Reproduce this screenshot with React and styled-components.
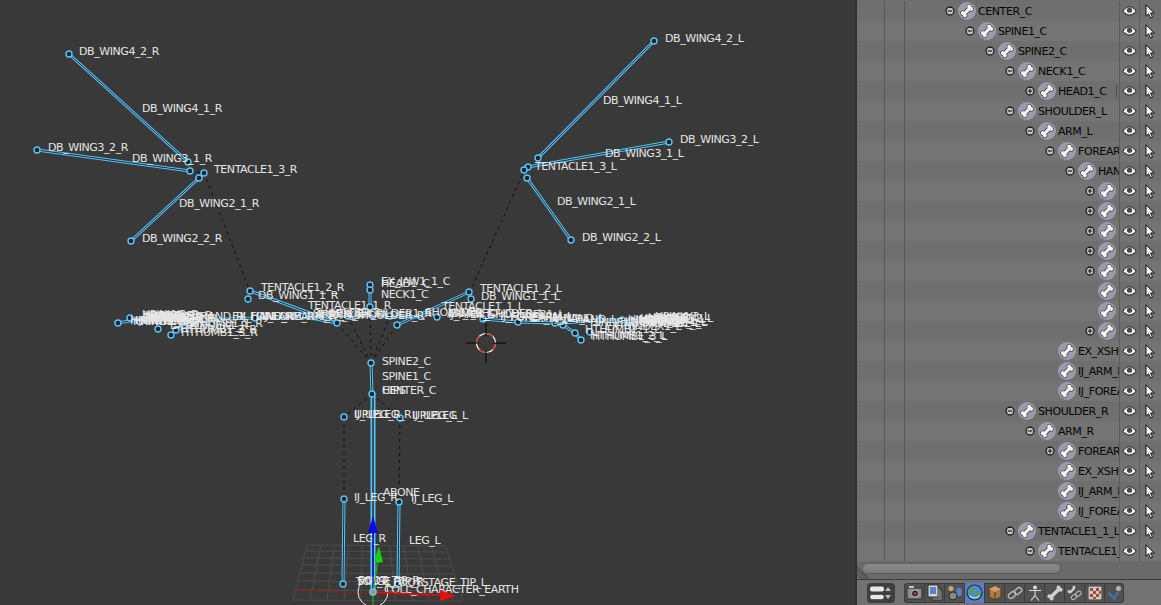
import React from "react";
import styled, { createGlobalStyle } from "styled-components";

const Global = createGlobalStyle`
  html, body { margin: 0; padding: 0; background: #393939; overflow: hidden; }
  #root { width: 1161px; height: 605px; }
`;

const Screen = styled.div`
  display: flex;
  width: 1161px;
  height: 605px;
  font-family: "DejaVu Sans", sans-serif;
`;
const Viewport = styled.main`
  width: 855px;
  height: 605px;
  background: #393939;
  flex: none;
`;
const Canvas = styled.svg`
  display: block;
`;
const BoneLabel = styled.text`
  font-family: "DejaVu Sans", sans-serif;
  font-size: 11px;
  letter-spacing: -0.42px;
  fill: #e6e6e6;
  dominant-baseline: central;
`;
const Panel = styled.aside`
  width: 306px;
  flex: none;
  height: 605px;
  display: flex;
  flex-direction: column;
  border-left: 2px solid #303030;
  box-sizing: border-box;
  background: #6e6e6e;
`;
const Tree = styled.div`
  height: 561px;
  padding-top: 1px;
  box-sizing: border-box;
  overflow: hidden;
  flex: none;
`;
const Row = styled.div`
  display: flex;
  height: 20px;
  background-color: ${(p) => (p.$odd ? "#747474" : "#6f6f6f")};
  background-image: linear-gradient(#585858, #585858), linear-gradient(#585858, #585858);
  background-size: 1px 100%, 1px 100%;
  background-position: 27px 0, 47px 0;
  background-repeat: no-repeat;
`;
const Item = styled.div`
  position: relative;
  width: 262px;
  flex: none;
  display: flex;
  align-items: center;
  overflow: hidden;
  box-sizing: border-box;
  padding-left: ${(p) => 87 + p.$level * 20}px;
  &::after {
    content: "";
    display: ${(p) => (p.$grip ? "block" : "none")};
    position: absolute;
    right: 2px;
    top: 4px;
    width: 1px;
    height: 12px;
    background: #4a4a4a;
  }
`;
const Expander = styled.span`
  width: 12px;
  height: 12px;
  flex: none;
  display: flex;
  margin-right: 2px;
`;
const BoneIconWrap = styled.span`
  width: 18px;
  height: 18px;
  flex: none;
  display: flex;
  margin-right: 2px;
`;
const Name = styled.span`
  font-size: 11px;
  letter-spacing: -0.42px;
  color: #050505;
  white-space: nowrap;
`;
const Restrict = styled.div`
  width: 20px;
  flex: none;
  display: flex;
  align-items: center;
  justify-content: center;
  border-left: 1px solid #5c5c5c;
  box-sizing: border-box;
`;
const ScrollArea = styled.div`
  position: relative;
  height: 18px;
  flex: none;
  background: #6a6a6a;
  padding: 2px 0 0 5px;
  box-sizing: border-box;
`;
const Thumb = styled.div`
  width: 199px;
  height: 11px;
  border-radius: 6px;
  background: linear-gradient(#8c8c8c, #7a7a7a);
  border: 1px solid #5e5e5e;
  box-sizing: border-box;
`;
const Corner = styled.svg`
  position: absolute;
  left: 0;
  bottom: 0;
`;
const Header = styled.footer`
  flex: 1;
  display: flex;
  align-items: center;
  gap: 9px;
  padding-left: 10px;
  background: #727272;
  border-top: 1px solid #3c3c3c;
`;
const EditorButton = styled.div`
  width: 28px;
  height: 20px;
  border-radius: 4px;
  background: #3f3f3f;
  display: flex;
  align-items: center;
  justify-content: center;
`;
const Tabs = styled.div`
  display: flex;
  border-radius: 4px;
  overflow: hidden;
  background: #515151;
  box-shadow: inset 0 0 0 1px #3a3a3a;
`;
const Tab = styled.div`
  width: 20px;
  height: 20px;
  display: flex;
  align-items: center;
  justify-content: center;
  background: ${(p) => (p.$active ? "#5680c2" : "transparent")};
  border-left: 1px solid #3c3c3c;
  box-sizing: border-box;
`;

/* ---------- small outliner icons ---------- */
const ExpandIcon = ({ open }) => (
  <svg width="12" height="12" viewBox="0 0 12 12">
    <circle cx="6" cy="6" r="3.9" fill="#c4c4c4" stroke="#111" strokeWidth="1.1" />
    <path d={open ? "M3.8 6h4.4" : "M3.8 6h4.4M6 3.8v4.4"} stroke="#111" strokeWidth="1.1" />
  </svg>
);
const boneKnobs = [[4.4, 7.5], [4.4, 10.5], [13.6, 7.5], [13.6, 10.5]];
const BoneIcon = () => (
  <svg width="18" height="18" viewBox="0 0 18 18">
    <circle cx="9" cy="9" r="9" fill="#9b9bad" />
    <g transform="rotate(-45 9 9)">
      <rect x="4" y="6.7" width="10" height="4.6" fill="#2e2e2e" />
      {boneKnobs.map(([x, y], i) => <circle key={i} cx={x} cy={y} r="2.6" fill="#2e2e2e" />)}
      {boneKnobs.map(([x, y], i) => <circle key={i} cx={x} cy={y} r="2" fill="#f6f6f6" />)}
      <rect x="4" y="7.4" width="10" height="3.2" fill="#f6f6f6" />
    </g>
  </svg>
);
const EyeIcon = () => (
  <svg width="15" height="12" viewBox="0 0 15 12">
    <path d="M.8 6.2C3 3 5.2 1.8 7.5 1.8s4.5 1.2 6.7 4.4C12 8.6 9.8 10 7.5 10S3 8.6.8 6.2z" fill="#f2f2f2" stroke="#1c1c1c" strokeWidth="1" />
    <circle cx="7.5" cy="5.2" r="2.6" fill="#4a4a4a" />
  </svg>
);
const CursorIcon = () => (
  <svg width="12" height="15" viewBox="0 0 12 15">
    <path d="M2 .8v11.4l2.6-2.4 1.9 4.2 2-.9-1.9-4.1h3.6z" fill="#f5f5f5" stroke="#111" strokeWidth="1" />
  </svg>
);

/* ---------- header tab icons ---------- */
const tabIcons = [
  <svg key="c" width="17" height="15" viewBox="0 0 17 15"><rect x="1" y="3" width="15" height="11" rx="1" fill="#8a8a8a" stroke="#2a2a2a" /><rect x="3" y="1" width="5" height="2" fill="#c4c4c4" /><circle cx="9" cy="8.5" r="3.6" fill="#2b2b2b" stroke="#bbb" /><circle cx="9" cy="8.5" r="1.4" fill="#b04040" /></svg>,
  <svg key="l" width="17" height="17" viewBox="0 0 17 17"><rect x="6" y="6" width="10" height="10" fill="#a0a0a0" stroke="#333" /><rect x="4" y="4" width="10" height="10" fill="#c0c0c0" stroke="#333" /><rect x="2" y="1" width="10" height="12" fill="#d4d4d4" stroke="#333" /><rect x="4" y="3" width="6" height="7" fill="#5a83c4" /></svg>,
  <svg key="s" width="16" height="16" viewBox="0 0 16 16"><circle cx="4" cy="3.5" r="2.6" fill="#b5ae72" /><rect x="9.5" y="3" width="5" height="8" rx="2" fill="#5a83c4" /><circle cx="6" cy="11" r="4" fill="#8a8a8a" stroke="#2c2c2c" /></svg>,
  <svg key="w" width="17" height="17" viewBox="0 0 16 16"><circle cx="8" cy="8" r="7" fill="#4a8fd0" stroke="#1c2c40" /><path d="M4 4c2-1 3-1 4 1s-1 2-1 4-2 2-3 0-1-3 0-5zM10 8c2-1 3 0 3 2s-2 3-3 2-1-3 0-4z" fill="#5f9a4c" /><path d="M3 11a7 7 0 0 0 10 0" fill="none" stroke="#ddd" /></svg>,
  <svg key="o" width="16" height="16" viewBox="0 0 16 16"><path d="M8 1l6 3v8l-6 3-6-3V4z" fill="#a97a48" stroke="#4a3418" /><path d="M2 4l6 3 6-3-6-3z" fill="#d0a06a" /><path d="M8 7v8" stroke="#4a3418" /></svg>,
  <svg key="k" width="16" height="16" viewBox="0 0 16 16" fill="none" stroke="#b8b8b8" strokeWidth="1.4"><rect x="1" y="7.5" width="8" height="5" rx="2.5" transform="rotate(-40 5 10)" /><rect x="7" y="3.5" width="8" height="5" rx="2.5" transform="rotate(-40 11 6)" /></svg>,
  <svg key="a" width="16" height="16" viewBox="0 0 16 16" fill="none" stroke="#dcdcdc" strokeWidth="1.1"><circle cx="8" cy="2.5" r="1.4" fill="#dcdcdc" /><path d="M2 5.5h12M8 5.5v5l-4 5M8 10.5l4 5" /></svg>,
  <svg key="b" width="16" height="16" viewBox="0 0 16 16"><path d="M3.5 12.5l9-9" stroke="#d0d0d0" strokeWidth="3.4" /><circle cx="11.5" cy="2.6" r="2" fill="#d0d0d0" /><circle cx="13.6" cy="4.8" r="2" fill="#d0d0d0" /><circle cx="2.4" cy="11.2" r="2" fill="#d0d0d0" /><circle cx="4.6" cy="13.4" r="2" fill="#d0d0d0" /></svg>,
  <svg key="bc" width="16" height="16" viewBox="0 0 16 16" fill="none"><path d="M2.5 8l5-5" stroke="#d0d0d0" strokeWidth="2.4" /><circle cx="7" cy="2" r="1.5" fill="#d0d0d0" /><circle cx="2" cy="6.5" r="1.5" fill="#d0d0d0" /><rect x="4" y="10" width="6" height="4" rx="2" stroke="#c0c0c0" transform="rotate(-40 7 12)" /><rect x="8.5" y="7" width="6" height="4" rx="2" stroke="#c0c0c0" transform="rotate(-40 11 9)" /></svg>,
  <svg key="t" width="14" height="14" viewBox="0 0 14 14"><rect width="14" height="14" fill="#d4c8c4" stroke="#333" /><path d="M2 2h3v3H2zM8 2h3v3H8zM5 5h3v3H5zM11 5h2v3h-2zM2 8h3v3H2zM8 8h3v3H8zM5 11h3v2H5z" fill="#9a4a40" /></svg>,
  <svg key="p" width="16" height="16" viewBox="0 0 16 16"><path d="M1.5 7.5l5.5 6 4-6.5" fill="none" stroke="#4a6c9c" strokeWidth="2.6" /><circle cx="11.5" cy="3.5" r="3" fill="#b4b4b4" stroke="#333" strokeWidth=".6" /></svg>,
];

/* ---------- outliner data ---------- */
const rows = [
  ["CENTER_C", 0, "-"], ["SPINE1_C", 1, "-"], ["SPINE2_C", 2, "-"], ["NECK1_C", 3, "-"],
  ["HEAD1_C", 4, "+"], ["SHOULDER_L", 3, "-"], ["ARM_L", 4, "-"], ["FOREARM_L", 5, "-"],
  ["HAND_L", 6, "-"], ["", 7, "+"], ["", 7, "+"], ["", 7, "+"], ["", 7, "+"], ["", 7, "+"],
  ["", 7, ""], ["", 7, ""], ["", 7, "+"], ["EX_XSHOULDER_L", 5, ""], ["IJ_ARM_L", 5, ""],
  ["IJ_FOREARM_L", 5, ""], ["SHOULDER_R", 3, "-"], ["ARM_R", 4, "-"], ["FOREARM_R", 5, "+"],
  ["EX_XSHOULDER_R", 5, ""], ["IJ_ARM_R", 5, ""], ["IJ_FOREARM_R", 5, ""],
  ["TENTACLE1_1_L", 3, "-"], ["TENTACLE1_2_L", 4, "-"],
];

/* ---------- armature data ---------- */
const bones = [
  [69, 54, 188, 162], [37, 150, 190, 171], [199, 178, 131, 241],
  [654, 41, 538, 158], [669, 142, 528, 167], [527, 178, 571, 240],
  [250, 291, 337, 323], [469, 292, 397, 325],
  [370, 290, 370, 307], [371, 363, 372, 394],
  [344, 499, 343, 584], [399, 502, 398, 584],
  [337, 323, 305, 317], [303, 316, 255, 318], [255, 318, 200, 320], [200, 320, 176, 330], [176, 330, 171, 335],
  [200, 320, 140, 319], [140, 319, 118, 323], [390, 316, 348, 316], [425, 317, 390, 316],
  [483, 319, 518, 322], [518, 322, 555, 323], [555, 323, 563, 325], [563, 325, 575, 333], [575, 333, 581, 340],
  [563, 323, 600, 320], [600, 320, 622, 320], [622, 320, 632, 327],
];
const joints = [
  [69, 54], [188, 162], [37, 150], [190, 171], [199, 178], [204, 173], [131, 241],
  [654, 41], [538, 158], [669, 142], [528, 167], [524, 170], [527, 178], [571, 240],
  [250, 291], [248, 299], [337, 323], [469, 292], [471, 299], [397, 325],
  [370, 285], [370, 290], [370, 307], [371, 363], [372, 394], [344, 417], [400, 418],
  [344, 499], [399, 502], [343, 584], [398, 584], [373, 592],
  [118, 323], [130, 318], [140, 322], [158, 329], [171, 335], [176, 330], [255, 318], [303, 316], [348, 316], [390, 316], [437, 317],
  [483, 319], [518, 322], [555, 323], [563, 325], [575, 333], [581, 340], [590, 332], [600, 320], [622, 320], [632, 327],
];
const dashes = [
  [204, 173, 250, 291], [190, 171, 204, 173], [522, 175, 470, 292],
  [371, 363, 337, 323], [371, 363, 348, 316], [371, 363, 370, 307], [371, 363, 390, 316], [371, 363, 397, 325],
  [372, 394, 344, 417], [372, 394, 400, 418], [344, 417, 344, 499], [400, 418, 399, 502],
];
const labels = [
  ["DB_WING4_2_R", 79, 51], ["DB_WING4_1_R", 142, 108], ["DB_WING3_2_R", 48, 147], ["DB_WING3_1_R", 132, 158],
  ["TENTACLE1_3_R", 214, 169], ["DB_WING2_1_R", 179, 203], ["DB_WING2_2_R", 142, 238],
  ["DB_WING4_2_L", 665, 38], ["DB_WING4_1_L", 603, 100], ["DB_WING3_2_L", 680, 139], ["DB_WING3_1_L", 605, 153],
  ["TENTACLE1_3_L", 535, 166], ["DB_WING2_1_L", 557, 201], ["DB_WING2_2_L", 582, 237],
  ["TENTACLE1_2_R", 261, 287], ["DB_WING1_1_R", 258, 295], ["TENTACLE1_1_R", 308, 305],
  ["TENTACLE1_2_L", 480, 288], ["DB_WING1_1_L", 481, 296], ["TENTACLE1_1_L", 442, 306],
  ["EX_JAW1_1_C", 381, 281], ["HEAD1_C", 381, 283], ["NECK1_C", 381, 294],
  ["SPINE2_C", 382, 361], ["SPINE1_C", 382, 376], ["CENTER_C", 382, 390], ["HIPS", 382, 390],
  ["UPLEG_R", 354, 414], ["IJ_UPLEG_R", 354, 414], ["UPLEG_L", 412, 415], ["IJ_UPLEG_L", 412, 415],
  ["IJ_LEG_R", 354, 497], ["ABONE", 383, 492], ["IJ_LEG_L", 411, 498], ["LEG_R", 353, 538], ["LEG_L", 409, 540],
  ["TOE_R", 356, 581], ["STAGE_TIP_R", 357, 581], ["FOOT_TIP_R", 358, 580],
  ["FOOTSTAGE_TIP_L", 393, 582], ["COLL_CHARACTER_EARTH", 384, 589],
  /* left hand cluster */
  ["HPINKY3_R", 142, 314], ["HPINKY2_R", 146, 316], ["HRING3_R", 143, 315], ["HRING2_R", 150, 317],
  ["HMIDDLE3_R", 145, 315], ["HMIDDLE2_R", 150, 318], ["HINDEX3_R", 148, 316], ["HINDEX2_R", 155, 318],
  ["HPINKY1_R", 130, 320], ["HRING1_R", 133, 321], ["HMIDDLE1_R", 135, 320], ["HINDEX1_R", 140, 321],
  ["HAND_R", 200, 316], ["EX_HAND_R", 232, 316], ["IJ_HAND_R", 240, 316], ["FOREARM_R", 250, 316],
  ["IJ_FOREARM_R", 262, 316], ["ARM_R", 315, 314], ["IJ_ARM_R", 318, 314], ["SHOULDER_R", 313, 313],
  ["EX_XSHOULDER_R", 328, 315], ["EX_SHOULDER1_R", 336, 313], ["EX_HINDEX1_R", 170, 325],
  ["HTHUMB1_1_R", 186, 323], ["HTHUMB1_2_R", 180, 329], ["HTHUMB1_3_R", 181, 332],
  /* right hand cluster */
  ["SHOULDER_L", 425, 312], ["ARM_L", 447, 313], ["IJ_ARM_L", 448, 314], ["EX_XSHOULDER_L", 449, 313],
  ["EX_SHOULDER1_L", 470, 314], ["IJ_FOREARM_L", 500, 316], ["FOREARM_L", 510, 317], ["EX_HAND_L", 530, 318],
  ["IJ_HAND_L", 552, 318], ["HAND_L", 575, 319], ["HINDEX1_L", 590, 322],
  ["HPINKY3_L", 655, 316], ["HPINKY2_L", 658, 318], ["HRING3_L", 648, 317], ["HRING2_L", 640, 319],
  ["HMIDDLE3_L", 640, 318], ["HMIDDLE2_L", 630, 320], ["HINDEX3_L", 628, 319], ["HINDEX2_L", 620, 321],
  ["HPINKY1_L", 652, 322], ["HRING1_L", 646, 322], ["HMIDDLE1_L", 635, 323], ["EX_HINDEX1_L", 605, 326],
  ["HTHUMB1_1_L", 585, 329], ["HTHUMB1_2_L", 590, 335], ["HTHUMB1_3_L", 592, 336],
];

const gridLines = (() => {
  const out = [];
  for (let i = 0; i <= 10; i++) {
    const t = i / 10;
    out.push(`M${307 + t * 138} 545L${293 + t * 170} 600`);
  }
  [545, 551, 558, 565, 573, 581, 590, 600].forEach((y) => {
    const k = (y - 545) / 55;
    out.push(`M${307 - 14 * k} ${y}L${445 + 18 * k} ${y + 1}`);
  });
  return out.join("");
})();

const Armature = () => (
  <Canvas width="855" height="605" viewBox="0 0 855 605">
    <path d={gridLines} stroke="#4c4c4c" strokeWidth="1" fill="none" />
    <path d="M293 590L430 596" stroke="#8a1f1f" strokeWidth="1" />
    {dashes.map(([a, b, c, d], i) => (
      <line key={i} x1={a} y1={b} x2={c} y2={d} stroke="#0d0d0d" strokeWidth="1" strokeDasharray="3 4" />
    ))}
    {bones.map(([a, b, c, d], i) => (
      <g key={i}>
        <line x1={a} y1={b} x2={c} y2={d} stroke="#58c4fa" strokeWidth="3" />
        <line x1={a} y1={b} x2={c} y2={d} stroke="#1c2a33" strokeWidth="1" />
      </g>
    ))}
    <line x1="373" y1="394" x2="373" y2="592" stroke="#58c4fa" strokeWidth="5" />
    <line x1="373" y1="394" x2="373" y2="592" stroke="#2a3238" strokeWidth="1.6" />
    {joints.map(([x, y], i) => (
      <circle key={i} cx={x} cy={y} r="3" fill="#1d2226" stroke="#58c4fa" strokeWidth="1.4" />
    ))}
    {/* 3D cursor */}
    <circle cx="486" cy="343" r="9.5" fill="none" stroke="#fff" strokeWidth="1.2" />
    <circle cx="486" cy="343" r="9.5" fill="none" stroke="#d21a1a" strokeWidth="1.2" strokeDasharray="7.5 7.4" />
    <path d="M466 343h13M493 343h13M486 323v13M486 350v13" stroke="#050505" strokeWidth="1" />
    {labels.map(([t, x, y], i) => (
      <BoneLabel key={i} x={x} y={y}>{t}</BoneLabel>
    ))}
    {/* transform gizmo */}
    <circle cx="373" cy="592" r="15" fill="none" stroke="#e8e8e8" strokeWidth="1" />
    <path d="M373 592V530" stroke="#1313d8" strokeWidth="1.5" />
    <path d="M373 516l-5 17h10z" fill="#0a0ae6" />
    <path d="M373 592L378 560M373 592V605" stroke="#12c012" strokeWidth="1.2" />
    <path d="M379 546l-5 15 4 2 5-1z" fill="#12d012" />
    <path d="M373 592L440 595" stroke="#e01010" strokeWidth="1.5" />
    <path d="M456 596l-16-6v11z" fill="#e61010" />
    <circle cx="373" cy="592" r="3" fill="#c08a4c" stroke="#58c4fa" strokeWidth="1.4" />
  </Canvas>
);

export default function App() {
  return (
    <Screen>
      <Global />
      <Viewport>
        <Armature />
      </Viewport>
      <Panel>
        <Tree>
          {rows.map(([name, level, exp], i) => (
            <Row key={i} $odd={i % 2 === 1}>
              <Item $level={level} $grip={name === "HEAD1_C"}>
                <Expander>{exp && <ExpandIcon open={exp === "-"} />}</Expander>
                <BoneIconWrap><BoneIcon /></BoneIconWrap>
                <Name>{name}</Name>
              </Item>
              <Restrict><EyeIcon /></Restrict>
              <Restrict><CursorIcon /></Restrict>
            </Row>
          ))}
        </Tree>
        <ScrollArea>
          <Thumb />
          <Corner width="12" height="12" viewBox="0 0 12 12">
            <path d="M0 3l9 9M0 7l5 5M0 0l12 12" stroke="#3c3c3c" strokeWidth="1" />
          </Corner>
        </ScrollArea>
        <Header>
          <EditorButton>
            <svg width="24" height="16" viewBox="0 0 24 16">
              <rect x="1" y="1.5" width="14" height="5" rx="2" fill="#e8e8e8" />
              <rect x="1" y="9.5" width="14" height="5" rx="2" fill="#e8e8e8" stroke="#222" strokeWidth=".5" />
              <path d="M19 2l3 4h-6zM19 14l3-4h-6z" fill="#bdbdbd" />
            </svg>
          </EditorButton>
          <Tabs>
            {tabIcons.map((ic, i) => (
              <Tab key={i} $active={i === 3}>{ic}</Tab>
            ))}
          </Tabs>
        </Header>
      </Panel>
    </Screen>
  );
}
